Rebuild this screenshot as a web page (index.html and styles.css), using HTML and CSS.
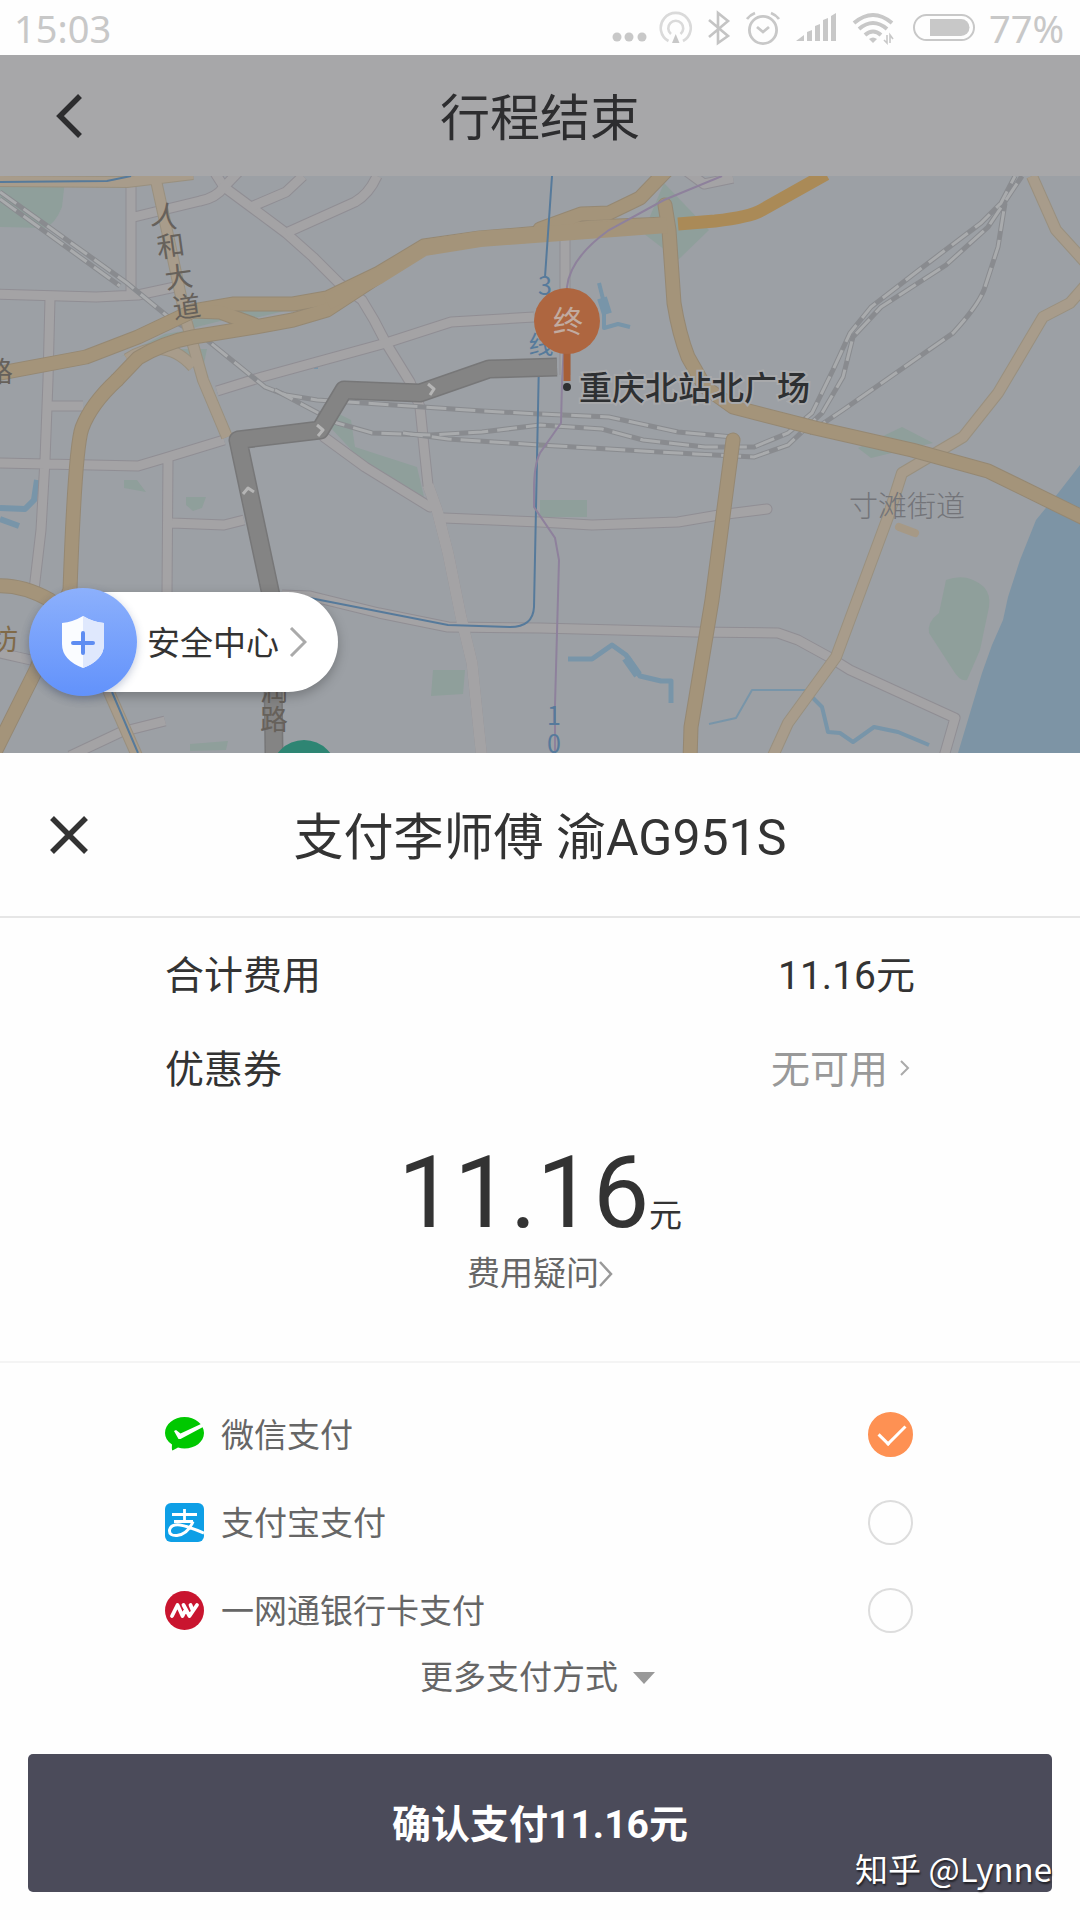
FILE: index.html
```html
<!DOCTYPE html>
<html lang="zh-CN">
<head>
<meta charset="utf-8">
<meta name="viewport" content="width=device-width, initial-scale=1">
<title>行程结束</title>
<link rel="stylesheet" href="styles.css">
</head>
<body>
<div class="status-bar">
  <span class="status-time">15:03</span>
  <div class="status-icons">
    <svg width="36" height="36" viewBox="0 0 36 36" fill="#c8c8c8"><circle cx="6" cy="27" r="4.5"/><circle cx="18" cy="27" r="4.5"/><circle cx="31" cy="27" r="4.5"/></svg>
    <svg width="34" height="36" viewBox="0 0 34 36" fill="none" stroke="#dadada" stroke-width="2.6"><path d="M9.500 31A15 15 0 1 1 24 31"/><path d="M12 24A7.500 7.500 0 1 1 21.500 24"/><path d="M16.700 24L20.500 33H13Z" fill="#c8c8c8" stroke="none"/></svg>
    <svg width="28" height="36" viewBox="0 0 28 36" fill="none" stroke="#c4c4c4" stroke-width="2.600"><path d="M4 10L23 26L13 33V3L23 11L4 27"/></svg>
    <svg width="36" height="36" viewBox="0 0 36 36" fill="none" stroke="#c8c8c8" stroke-width="2.800"><circle cx="18" cy="20" r="13.600"/><path d="M12 17L18 22L24 17M2 9Q5 5 10 3M26 3Q31 5 34 9"/></svg>
    <svg width="46" height="36" viewBox="0 0 46 36" fill="#c8c8c8"><path d="M3 31L11 25V31ZM14 22L19 20V31H14ZM22 16L27 14V31H22ZM30 10L35 8V31H30ZM38 6L43 3V31H38Z"/></svg>
    <svg width="46" height="36" viewBox="0 0 46 36" fill="none" stroke="#c8c8c8" stroke-width="4"><path d="M3 13Q22 -3 41 13M8 19Q22 7 36 19M14 25Q22 18 30 25"/><path d="M18 29Q22 26 26 29L22 33Z" fill="#c8c8c8" stroke="none"/><path d="M36 25V33L33 30M39 33V25L42 29" stroke-width="1.600"/></svg>
    <svg width="68" height="36" viewBox="0 0 68 36"><rect x="5" y="5" width="60" height="25" rx="12.500" fill="none" stroke="#c8c8c8" stroke-width="2"/><path d="M21 9H52A8.500 8.500 0 0 1 52 26H21Z" fill="#c8c8c8"/></svg>
    <span class="status-battery">77%</span>
  </div>
</div>

<header class="nav">
  <button class="icon-button" type="button" aria-label="返回">
    <svg width="26" height="44" viewBox="0 0 26 44" fill="none" stroke="#2d2d2f" stroke-width="5.500"><path d="M24 2L4 22L24 42"/></svg>
  </button>
  <h1 class="title">行程结束</h1>
</header>

<main>
<section class="map">
  <svg class="map-canvas" viewBox="0 176 1080 577">
    <rect y="176" width="1080" height="577" fill="#9ca0a5"/>
    <!-- parks -->
    <g fill="#8f9f9b">
      <path d="M0 180H65L62 207Q55 224 45 228L0 227Z"/>
      <path d="M946 580Q967 572 984 587Q991 595 989 607L980 650L967 680Q960 682 953 670L929 633Q927 622 939 613Z"/>
      <path d="M664 183L709 230L678 260L643 233Z"/>
      <path d="M902 427L933 443L871 458L858 448Z"/>
      <path d="M337 413L351 420L355 447L417 467L424 497L358 457L330 427Z"/>
      <path d="M124 480L137 480L146 492L124 488ZM186 497H206L202 508L193 511L186 505ZM433 670H465L463 694L431 696ZM540 500H587V517H540ZM190 744L228 741L226 750L190 751Z"/>
      <path d="M232 309H293L255 318ZM195 318H232L185 330ZM120 357L165 334L190 330L150 345ZM170 349H207L203 368Z"/>
    </g>
    <!-- river and streams -->
    <path d="M1080 465L1059 492L1036 520L1020 560L1008 597L1003 620L992 645L982 673L958 753H1080Z" fill="#7d94a5"/>
    <g fill="none" stroke="#7895a9" stroke-linejoin="round">
      <path d="M37 480L34 500L25 509L0 508M0 519L19 526" stroke-width="6"/>
      <path d="M568 659H592L612 645L626 655L640 676L661 681H671V703" stroke-width="5"/>
      <path d="M626 658L638 675" stroke-width="9"/>
      <path d="M709 724L736 718L752 690H805" stroke-width="2"/>
      <path d="M808 693L822 707L828 732L840 733L853 742L874 727L898 732L929 745" stroke-width="4"/>
      <path d="M599 283L604 303V328L618 324L630 327" stroke-width="4"/><path d="M602 298L607 314" stroke-width="10"/>
      <path d="M311 363H319M316 357V369" stroke-width="4"/>
    </g>
    <!-- each road is drawn twice: casing, then fill -->
    <defs>
      <g id="minor" fill="none" stroke-linejoin="round">
        <path d="M210 165L224 187L251 207L286 233L313 257L339 283L362 300L374 320L386 343L410 382L420 407L424 447L428 485L437 510L448 553L461 617L472 663L482 760"/>
        <path d="M245 165L224 187Q216 198 200 201L134 217M251 207L286 192L303 176M286 233L355 202Q369 194 377 176M131 185V293M-5 294L96 297L138 295L175 287"/>
        <path d="M50 298L48 380L45 460L41 530L34 590M534 317L451 322L386 343L262 377L217 391M-5 463L138 466L165 458L224 440M48 406H83M168 460L167 593M172 523L224 525L244 520"/>
        <path d="M324 437L365 467L430 507M444 518L540 522L592 525L678 522L719 515L767 509" stroke-linecap="round"/>
        <path d="M282 595L310 596L379 613L448 627L540 628L695 632L778 633L798 640L829 657L850 670L955 718L943 760M70 756L121 732L165 721M565 240V375M685 170L704 184L733 178M0 653L31 660"/>
      </g>
      <g id="railways" fill="none">
        <path d="M0 192L127 283L172 320L207 340L265 387L286 395L317 400L379 404L482 411L540 414L609 417L678 432L733 437M0 199L120 286"/>
        <path d="M275 390L337 423L372 433L430 435L482 432L540 425L602 429L643 440L705 447L754 447L788 433L812 413L833 370L850 333L871 307L919 270L981 223L1001 203L1015 176"/>
        <path d="M403 433L448 439L540 445L574 447L695 454L754 457L788 445L822 413L843 377L853 337L881 307L946 265L988 227L1022 176M809 433L843 410L953 333Q977 307 984 290L998 247L1005 203"/>
      </g>
      <g id="primary" fill="none" stroke-linejoin="round">
        <path d="M-5 374L86 357L138 337L193 311L234 304L293 304L327 298L379 273L424 246L480 238L540 233L592 227L667 224"/>
        <path d="M117 380L138 358Q165 342 193 337L255 327L293 320L327 310L379 276M193 311L220 312L255 325"/>
        <path d="M117 380Q91 404 82 428Q75 448 70 590L36 670L-5 752M-5 586Q21 584 50 600"/>
        <path d="M667 170L640 198L609 213L581 214L540 229M665 205L669 230L674 303Q679 334 688 357L705 387L733 407L815 428L912 450L988 471L1090 521M733 440L712 600L691 727L690 760"/>
      </g>
      <g id="secondary" fill="none" stroke-linejoin="round">
        <path d="M155 176L169 240L186 320L203 380L227 437M-5 181L127 182L193 174M127 359Q165 335 193 367M108 690L138 758"/>
        <path d="M1032 176L1056 230L1085 262M1085 286L1070 303L1043 317L998 393L963 437L902 473L888 517L836 657L788 723L772 758"/>
      </g>
    </defs>
    <use href="#minor" stroke="#908e94" stroke-width="11"/>
    <use href="#minor" stroke="#a4a3a5" stroke-width="9"/>
    <path d="M428 485L437 510L448 553L461 617L472 663L482 760" fill="none" stroke="#a4a3a5" stroke-width="11"/>
    <use href="#railways" stroke="#898b8f" stroke-width="5"/>
    <use href="#railways" stroke="#a9abad" stroke-width="3" stroke-dasharray="20 9"/>
    <use href="#secondary" stroke="#99907f" stroke-width="12"/>
    <use href="#secondary" stroke="#a89c8b" stroke-width="10"/>
    <path d="M899 527L915 533" stroke="#a69986" stroke-width="8" stroke-linecap="round"/>
    <use href="#primary" stroke="#958873" stroke-width="15" stroke-linecap="round"/>
    <use href="#primary" stroke="#a4947a" stroke-width="13" stroke-linecap="round"/>
    <path d="M327 302L379 276L424 248L480 239L667 225" fill="none" stroke="#a4947a" stroke-width="16" stroke-linejoin="round"/>
    <path d="M678 224L715 221Q750 217 762 210L826 174" fill="none" stroke="#aa8a57" stroke-width="13"/>
    <!-- metro lines -->
    <g fill="none" stroke-width="2">
      <path d="M552 176L545 277M539 360L534 607Q533 627 510 627L448 625L310 598M0 182L107 181L131 176M112 692L138 753" stroke="#567a9b"/>
      <path d="M722 176L664 200L609 230Q570 258 567 287L562 383L561 423L540 453Q534 465 534 490V507L555 538L559 560L555 705V753" stroke="#8e819c"/>
    </g>
    <!-- travelled route -->
    <g fill="none" stroke-linejoin="round">
      <path d="M274 753L272 600L238 440L320 430L344 390L420 393L489 369L557 367" stroke="#777778" stroke-width="19"/>
      <path d="M274 753L272 600L238 440L320 430L344 390L420 393L489 369L557 367" stroke="#848484" stroke-width="16"/>
      <path d="M428 384L434 389L430 395M317 425L323 430L318 436M243 494L248 488L254 492" stroke="#b5b5b5" stroke-width="3"/>
    </g>
    <circle cx="304" cy="773" r="33" fill="#2e8573"/>
    <!-- place names -->
    <g class="map-text" font-size="28" fill="#66615b" text-anchor="middle">
      <text transform="translate(164 226) rotate(8)">人</text>
      <text transform="translate(172 256) rotate(-8)">和</text>
      <text transform="translate(180 287) rotate(-8)">大</text>
      <text transform="translate(188 317) rotate(-8)">道</text>
      <text x="274" y="701">润</text><text x="274" y="730">路</text>
      <text x="-1" y="382">路</text><text x="4" y="650" fill="#806a49">坊</text>
      <g fill="#567a9b" font-size="25"><text x="545" y="295">3</text><text x="541" y="354">线</text><text x="554" y="725">1</text><text x="554" y="753">0</text></g>
    </g>
    <text class="map-text map-district" x="849" y="517" font-size="29" fill="#737479">寸滩街道</text>
    <path d="M567 350V381" stroke="#a75f38" stroke-width="7"/>
    <circle cx="567" cy="321" r="33" fill="#ae6640"/>
    <text class="map-text" x="568" y="332" font-size="30" fill="#c1aba0" text-anchor="middle">终</text>
    <circle cx="567" cy="387" r="4" fill="#2e3032"/>
    <text class="map-text map-destination" x="579" y="400" font-size="33">重庆北站北广场</text>
  </svg>
  <button class="safety" type="button">
    <span class="safety-badge">
      <svg width="42" height="52" viewBox="0 0 42 52"><path d="M21 0Q31 6 42 7V28Q42 44 21 52Q0 44 0 28V7Q11 6 21 0Z" fill="#fafcff"/><path d="M21 0Q31 6 42 7V28Q42 44 21 52Z" fill="#dfe8fd"/><path d="M21 17V37M11 27H31" stroke="#5e8df2" stroke-width="4" stroke-linecap="round"/></svg>
    </span>
    <span class="label">安全中心</span>
    <svg width="18" height="30" viewBox="0 0 18 30" fill="none" stroke="#aaa" stroke-width="3"><path d="M2 1L16 15L2 29"/></svg>
  </button>
</section>

<section class="sheet">
  <div class="sheet-head">
    <button class="icon-button" type="button" aria-label="关闭">
      <svg width="38" height="38" viewBox="0 0 38 38" stroke="#333" stroke-width="5.500"><path d="M2 2L36 36M36 2L2 36"/></svg>
    </button>
    <h2 class="title">支付李师傅 渝AG951S</h2>
  </div>

  <div class="bill">
    <div class="bill-row"><span class="label">合计费用</span><span class="label">11.16元</span></div>
    <div class="bill-row"><span class="label">优惠券</span>
      <button class="coupon" type="button"><span class="label">无可用</span>
        <svg width="10" height="16" viewBox="0 0 10 16" fill="none" stroke="#aaa" stroke-width="2"><path d="M1 1L8 8L1 15"/></svg>
      </button>
    </div>
    <p class="amount">11.16<span class="amount-unit">元</span></p>
    <a class="question" href="#">费用疑问<svg width="14" height="26" viewBox="0 0 14 26" fill="none" stroke="#999" stroke-width="2.500"><path d="M1 1L12 13L1 25"/></svg></a>
  </div>

  <form class="payment">
    <div class="methods">
      <label class="method">
        <svg width="39" height="39" viewBox="0 0 39 39"><path d="M19.500 2C30 2 39 9 39 18S30 33.500 19.500 33.500Q16 33.500 13 32.600L7.500 35.500Q6.500 35 7 29.500Q0 25 0 18C0 9 9 2 19.500 2Z" fill="#00c800"/><path d="M9 16L11 15L15.500 18.500L36 9L39 9.500L38 12L15.500 24L13.500 24Z" fill="#fff"/></svg>
        <span class="label">微信支付</span><input class="method-radio" type="radio" name="pay" value="wechat" checked>
      </label>
      <label class="method">
        <svg width="39" height="39" viewBox="0 0 39 39" fill="none" stroke="#fff"><rect width="39" height="39" rx="6" fill="#0e9fe6" stroke="none"/><path d="M7 11.500H32M19.500 6V18M9 18.500H28" stroke-width="2.800"/><path d="M28 18.500Q23 31 12 32.500Q4 33 4.500 27Q6 21 15 22Q22 23 39 30" stroke-width="3"/></svg>
        <span class="label">支付宝支付</span><input class="method-radio" type="radio" name="pay" value="alipay">
      </label>
      <label class="method">
        <svg width="39" height="39" viewBox="0 0 39 39" fill="none" stroke="#fff" stroke-width="3.800" stroke-linecap="round" stroke-linejoin="round"><circle cx="19.500" cy="19.500" r="19.500" fill="#c9152f" stroke="none"/><path d="M7 25L12.500 14L17.500 25L20 20M18.500 14L24.500 25L32 14M25.500 14L27.500 19"/></svg>
        <span class="label">一网通银行卡支付</span><input class="method-radio" type="radio" name="pay" value="cmb">
      </label>
    </div>
    <button class="more" type="button">更多支付方式
      <svg width="22" height="12" viewBox="0 0 22 12" fill="#999"><path d="M0 0H22L11 12Z"/></svg>
    </button>
    <div class="action">
      <button class="confirm" type="submit">确认支付11.16元</button>
      <span class="watermark">知乎 @Lynne</span>
    </div>
  </form>
</section>
</main>
</body>
</html>
```
FILE: styles.css
```css
* {
  box-sizing: border-box;
}

body {
  margin: 0;
  min-height: 100vh;
  background: #fefefe;
  color: #333;
  font-family: Roboto, "Noto Sans CJK SC", sans-serif;
  font-size: 33px;
  line-height: 48px;
}

button {
  margin: 0;
  padding: 0;
  border: 0;
  background: none;
  color: inherit;
  font: inherit;
  cursor: pointer;
}

svg {
  display: block;
  flex: none;
}

/* Chinese glyphs ride high in a Roboto line box */
.label {
  padding-top: 4px;
}

/* Status bar */
.status-bar {
  display: flex;
  align-items: center;
  justify-content: space-between;
  height: 55px;
  padding: 0 16px 0 14px;
  color: #c8c8c8;
  font-family: "Noto Sans", "Noto Sans CJK SC", sans-serif;
  font-size: 38px;
}

.status-icons {
  display: flex;
  align-items: center;
  gap: 12px;
}

/* Title bars */
.nav,
.sheet-head {
  display: grid;
  grid-template-columns: 138px 1fr 138px;
  align-items: center;
}

.nav {
  height: 121px;
  background: #a7a7a9;
  color: #2d2d2f;
}

.sheet-head {
  height: 165px;
  border-bottom: 2px solid #e6e6e6;
}

.icon-button {
  display: flex;
  align-items: center;
  justify-content: center;
  height: 100%;
}

.title {
  margin: 0;
  padding-top: 7px;
  font-size: 50px;
  font-weight: 400;
  line-height: 72px;
  text-align: center;
  white-space: nowrap;
}

/* Map */
.map {
  position: relative;
}

.map-canvas {
  width: 100%;
  height: auto;
}

.map-text {
  font-family: "Noto Sans CJK SC", sans-serif;
}

.map-district {
  font-weight: 300;
}

.map-destination {
  fill: #2e3032;
  font-weight: 500;
  stroke: #a8a9ab;
  stroke-width: 4px;
  paint-order: stroke;
}

.safety {
  position: absolute;
  bottom: 61px;
  left: 32px;
  display: flex;
  align-items: center;
  gap: 10px;
  height: 100px;
  padding-right: 31px;
  border-radius: 50px;
  background: #fff;
  box-shadow: 0 4px 12px rgb(0 0 0 / 25%);
}

.safety-badge {
  display: flex;
  align-items: center;
  justify-content: center;
  width: 108px;
  height: 108px;
  margin-left: -3px;
  border-radius: 50%;
  background: linear-gradient(#8cb0fc, #6292fb);
  box-shadow: 0 3px 8px rgb(60 80 130 / 30%);
}

/* Bill */
.bill {
  padding: 9px 165px 63px;
  border-bottom: 2px solid #f4f4f4;
}

.bill-row {
  display: flex;
  align-items: center;
  justify-content: space-between;
  height: 94px;
  font-size: 39px;
}

.coupon {
  display: flex;
  align-items: center;
  gap: 12px;
  padding-right: 5px;
  color: #999;
}

.amount {
  margin: 24px 0 0;
  font-size: 100px;
  line-height: 108px;
  text-align: center;
}

.amount-unit {
  font-size: 33px;
  line-height: 33px;
}

.question {
  display: flex;
  align-items: center;
  justify-content: center;
  margin-top: 3px;
  color: #666;
  text-decoration: none;
}

/* Payment methods */
.payment {
  padding: 27px 28px 28px;
  color: #666;
}

.methods {
  padding: 0 139px 0 137px;
}

.method {
  display: flex;
  align-items: center;
  gap: 17px;
  height: 88px;
}

.method-radio {
  position: relative;
  width: 45px;
  height: 45px;
  margin: 0 0 0 auto;
  border: 2px solid #ddd;
  border-radius: 50%;
  appearance: none;
}

.method-radio:checked {
  border-color: #fe9153;
  background: #fe9153;
}

.method-radio:checked::after {
  position: absolute;
  top: 10px;
  left: 9px;
  width: 23px;
  height: 12px;
  border: solid #fff;
  border-width: 0 0 3px 3px;
  transform: rotate(-45deg);
  content: "";
}

.more {
  display: flex;
  align-items: center;
  gap: 15px;
  margin: 0 auto;
  padding-right: 5px;
}

.action {
  position: relative;
  margin-top: 52px;
}

.confirm {
  width: 100%;
  height: 138px;
  padding-top: 4px;
  border-radius: 5px;
  background: #4b4b5a;
  color: #fff;
  font-size: 39px;
  font-weight: 700;
}

.watermark {
  position: absolute;
  right: 0;
  bottom: 0;
  color: #fff;
  font-family: "Noto Sans CJK SC", sans-serif;
  text-shadow: 1px 2px 2px rgb(0 0 0 / 60%);
}
```
